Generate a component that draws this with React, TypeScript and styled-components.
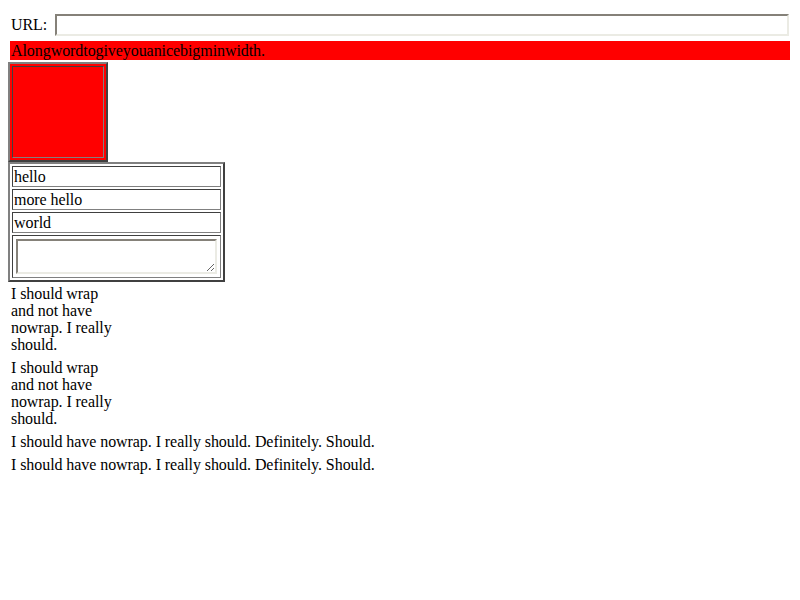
import React from "react";
import styled, { createGlobalStyle } from "styled-components";

const GlobalStyle = createGlobalStyle`
  html, body {
    background: #ffffff;
  }
  body {
    margin: 8px;
    font-family: "Liberation Serif", "Times New Roman", serif;
    font-size: 16px;
    line-height: 17px;
    letter-spacing: -0.07px;
    color: #000000;
  }
`;

const Page = styled.div`
  display: flex;
  flex-direction: column;
  align-items: flex-start;
`;

const HeaderTable = styled.div`
  align-self: stretch;
  display: flex;
  flex-direction: column;
  gap: 2px;
  padding: 2px;
`;

const UrlCell = styled.div`
  display: flex;
  align-items: center;
  height: 27px;
  padding: 1px;
`;

const UrlLabel = styled.span`
  white-space: nowrap;
`;

const UrlInput = styled.input`
  flex: 1;
  min-width: 0;
  height: 22px;
  box-sizing: border-box;
  margin: 0 0 0 8px;
  padding: 1px 2px;
  background: #ffffff;
  border-style: solid;
  border-width: 2px;
  border-color: #858179 #ebebe4 #ebebe4 #858179;
  font: inherit;
  outline: none;
`;

const BannerCell = styled.div`
  background: #ff0000;
  padding: 1px;
  white-space: nowrap;
`;

const OutsetTable = styled.div<{ $width: number; $fill?: string }>`
  box-sizing: border-box;
  width: ${(p) => p.$width}px;
  display: flex;
  flex-direction: column;
  gap: 2px;
  padding: 2px;
  border-style: solid;
  border-width: 2px;
  border-color: #808080 #404040 #404040 #808080;
  background: ${(p) => p.$fill ?? "transparent"};
`;

const RedCell = styled.div`
  height: 92px;
  box-sizing: border-box;
  background: #ff0000;
  border-style: solid;
  border-width: 1px;
  border-color: #404040 #808080 #808080 #404040;
`;

const FieldCell = styled.div`
  border-style: solid;
  border-width: 1px;
  border-color: #404040 #808080 #808080 #404040;
  padding: 1px;
  white-space: nowrap;
`;

const FieldArea = styled.textarea`
  display: block;
  box-sizing: border-box;
  width: 201px;
  height: 35px;
  margin: 2px;
  padding: 2px;
  border-style: solid;
  border-width: 2px;
  border-color: #858179 #ebebe4 #ebebe4 #858179;
  background: #ffffff;
  font: inherit;
  outline: none;
`;

const TextTable = styled.div`
  padding: 3px;
`;

const TextCell = styled.div<{ $wrap: boolean }>`
  width: ${(p) => (p.$wrap ? "105px" : "auto")};
  white-space: ${(p) => (p.$wrap ? "normal" : "nowrap")};
`;

const wrapText = "I should wrap and not have nowrap. I really should.";
const nowrapText = "I should have nowrap. I really should. Definitely. Should.";

export default function App() {
  return (
    <>
      <GlobalStyle />
      <Page>
        <HeaderTable>
          <UrlCell>
            <UrlLabel>URL:</UrlLabel>
            <UrlInput type="text" />
          </UrlCell>
          <BannerCell>Alongwordtogiveyouanicebigminwidth.</BannerCell>
        </HeaderTable>
        <OutsetTable $width={100} $fill="#ff0000">
          <RedCell />
        </OutsetTable>
        <OutsetTable $width={217}>
          <FieldCell>hello</FieldCell>
          <FieldCell>more hello</FieldCell>
          <FieldCell>world</FieldCell>
          <FieldCell>
            <FieldArea />
          </FieldCell>
        </OutsetTable>
        <TextTable>
          <TextCell $wrap>{wrapText}</TextCell>
        </TextTable>
        <TextTable>
          <TextCell $wrap>{wrapText}</TextCell>
        </TextTable>
        <TextTable>
          <TextCell $wrap={false}>{nowrapText}</TextCell>
        </TextTable>
        <TextTable>
          <TextCell $wrap={false}>{nowrapText}</TextCell>
        </TextTable>
      </Page>
    </>
  );
}
